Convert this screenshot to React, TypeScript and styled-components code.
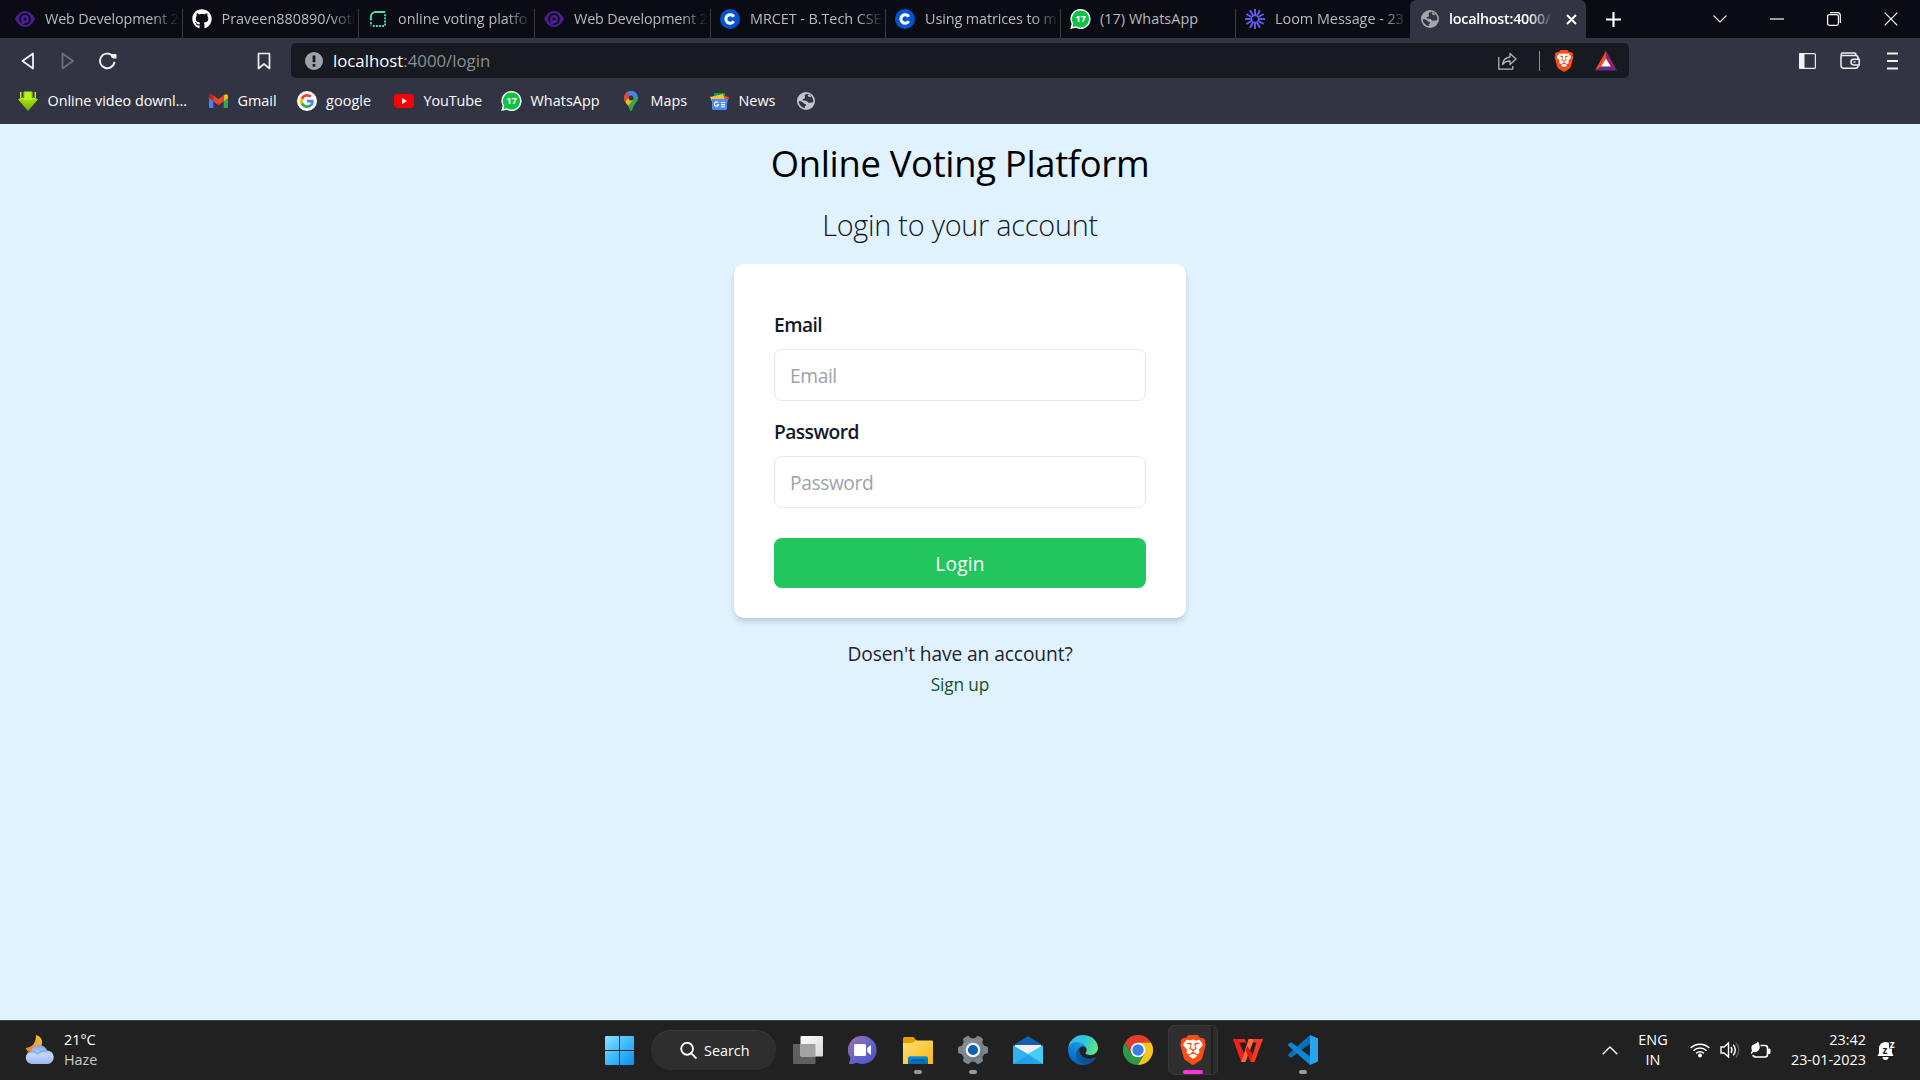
import React from "react";
import styled, { createGlobalStyle } from "styled-components";
import { FaGithub } from "react-icons/fa";
import { SiBrave } from "react-icons/si";

const Global = createGlobalStyle`
  * { box-sizing: border-box; }
  body { margin: 0; overflow: hidden; font-family: "Open Sans", "Noto Sans", sans-serif; }
  svg { display: block; flex: none; }
`;

const Screen = styled.div`
  display: flex;
  flex-direction: column;
  width: 1920px;
  height: 1080px;
  background: #e0f2fe;
`;

/* ---------- tab strip ---------- */

const TabStrip = styled.div`
  display: flex;
  height: 38px;
  padding-left: 6px;
  background: #0b0b14;
`;

const Tab = styled.div<{ $w: number; $active?: boolean; $last?: boolean }>`
  display: flex;
  align-items: center;
  flex: none;
  width: ${(p) => p.$w}px;
  padding-left: ${(p) => (p.$active ? 11 : 9)}px;
  color: ${(p) => (p.$active ? "#fff" : "#b9babd")};
  background: ${(p) =>
    p.$active
      ? "#323443"
      : p.$last
        ? "none"
        : "linear-gradient(#3b3b42, #3b3b42) right bottom / 1px 29px no-repeat"};
  border-radius: 6px 6px 0 0;
`;

const IconBox = styled.span<{ $w?: number }>`
  display: flex;
  justify-content: center;
  align-items: center;
  flex: none;
  width: ${(p) => p.$w ?? 20}px;
  height: 20px;
`;

const TabTitle = styled.span<{ $bold?: boolean; $track?: number; $solid?: boolean }>`
  flex: none;
  width: ${(p) => (p.$bold ? 105 : 134)}px;
  margin-left: 10px;
  overflow: hidden;
  white-space: nowrap;
  font-size: 14.4px;
  line-height: 24px;
  font-weight: ${(p) => (p.$bold ? 600 : 400)};
  letter-spacing: ${(p) => p.$track ?? 0}px;
  mask-image: ${(p) => (p.$solid ? "none" : "linear-gradient(90deg, #000 calc(100% - 26px), transparent)")};
`;

const CloseTab = styled.span`
  display: flex;
  margin-left: 12px;
`;

const NewTab = styled.span`
  display: flex;
  align-items: center;
  margin-left: 20px;
`;

const WindowButtons = styled.div`
  display: flex;
  align-items: center;
  margin-left: auto;
  padding-right: 22px;
  gap: 43px;
`;

/* ---------- navigation row ---------- */

const Toolbar = styled.div`
  display: flex;
  align-items: center;
  height: 45px;
  background: #323443;
`;

const NavButtons = styled.div`
  display: flex;
  align-items: center;
  width: 291px;
  padding-left: 18px;
`;

const NavButton = styled.span<{ $gap?: number }>`
  display: flex;
  margin-right: ${(p) => p.$gap ?? 20}px;
`;

const AddressBar = styled.div`
  display: flex;
  align-items: center;
  width: 1338px;
  height: 35px;
  padding: 0 12px 0 14px;
  border-radius: 5px;
  background: #181a21;
`;

const Address = styled.span`
  margin-left: 10px;
  font-size: 16.8px;
  line-height: 30px;
  color: #8c8e94;
`;

const Host = styled.span`
  color: #fff;
`;

const AddressActions = styled.div`
  display: flex;
  align-items: center;
  margin-left: auto;
`;

const Divider = styled.span`
  width: 1px;
  height: 20px;
  margin: 0 13.5px 0 21.500px;
  background: #8b8d92;
`;

const BraveShield = styled.span<{ $size: number }>`
  display: flex;
  justify-content: center;
  align-items: center;
  width: ${(p) => p.$size}px;
  height: ${(p) => p.$size}px;
  font-size: ${(p) => p.$size}px;
  color: #fb4d14;
  background:
    linear-gradient(#fff, #fff) 50% 26% / 66% 44% no-repeat,
    linear-gradient(#fff, #fff) 50% 60% / 56% 50% no-repeat;
`;

const BatBox = styled.span`
  display: flex;
  margin-left: 20px;
`;

const ToolbarEnd = styled.div`
  display: flex;
  align-items: center;
  margin-left: auto;
  padding-right: 22px;
`;

const EndIcon = styled.span<{ $gap?: number }>`
  display: flex;
  margin-right: ${(p) => p.$gap ?? 0}px;
`;

/* ---------- bookmarks ---------- */

const Bookmarks = styled.div`
  display: flex;
  height: 41px;
  padding: 0 0 5px 18px;
  background: #323443;
`;

const Bookmark = styled.div<{ $w: number; $track?: number }>`
  display: flex;
  align-items: center;
  gap: 9.5px;
  flex: none;
  width: ${(p) => p.$w}px;
  color: #fff;
  font-size: 14.4px;
  line-height: 24px;
  white-space: nowrap;
  letter-spacing: ${(p) => p.$track ?? 0}px;
`;

/* ---------- page ---------- */

const Page = styled.main`
  display: flex;
  flex-direction: column;
  align-items: center;
  flex: 1;
  padding-top: 14px;
`;

const Title = styled.h1`
  margin: 0;
  font-size: 36.4px;
  line-height: 50px;
  font-weight: 400;
  letter-spacing: -0.31px;
  color: #000;
`;

const Subtitle = styled.h2`
  margin: 17px 0 19px;
  font-size: 28.8px;
  line-height: 40px;
  font-weight: 300;
  letter-spacing: -0.23px;
  color: #111827;
`;

const Card = styled.form`
  display: flex;
  flex-direction: column;
  width: 452px;
  height: 354px;
  padding: 46px 40px 30px;
  border-radius: 10px;
  background: #fff;
  box-shadow: 0 5px 7px -1px rgba(0, 0, 0, 0.12), 0 2px 5px -2px rgba(0, 0, 0, 0.12);
`;

const FieldLabel = styled.label`
  margin-bottom: 9px;
  font-size: 19.2px;
  line-height: 30px;
  font-weight: 600;
  letter-spacing: -0.55px;
  color: #111827;
`;

const Field = styled.input`
  width: 372px;
  height: 52px;
  margin-bottom: 16px;
  padding: 1px 15px 0;
  border: 1px solid #e5e7eb;
  border-radius: 8px;
  outline: none;
  background: #fff;
  font-family: inherit;
  font-size: 19.2px;
  letter-spacing: -0.4px;
  &::placeholder { color: #9ca3af; opacity: 1; }
`;

const LoginButton = styled.button`
  height: 50px;
  margin-top: 14px;
  padding: 1px 0 0;
  border: 0;
  border-radius: 8px;
  background: #22c55e;
  color: #fff;
  font-family: inherit;
  font-size: 19.2px;
  letter-spacing: 0.2px;
`;

const Question = styled.p`
  margin: 21px 0 0;
  font-size: 19.2px;
  line-height: 30px;
  letter-spacing: -0.1px;
  color: #1f2430;
`;

const SignUp = styled.a`
  margin-top: 2px;
  font-size: 17.3px;
  line-height: 28px;
  letter-spacing: -0.15px;
  color: #14532d;
`;

/* ---------- taskbar ---------- */

const Taskbar = styled.footer`
  display: flex;
  align-items: center;
  height: 60px;
  padding-bottom: 1px;
  border-top: 1px solid #3b4145;
  background: #212121;
  color: #fff;
  font-size: 14.4px;
  line-height: 20px;
`;

const Weather = styled.div`
  display: flex;
  align-items: center;
  gap: 9px;
  width: 592px;
  padding: 0 0 1px 25px;
`;

const Muted = styled.div`
  color: #cbcbcb;
`;

const Start = styled.div`
  display: flex;
  justify-content: center;
  width: 55px;
`;

const SearchPill = styled.div`
  display: flex;
  align-items: center;
  gap: 7px;
  width: 125px;
  height: 40px;
  margin: 0 4px;
  padding-left: 29px;
  border-radius: 20px;
  border-top: 1px solid #3d3d3d;
  background: #2e2e2e;
`;

const AppSlot = styled.div`
  display: flex;
  flex-direction: column;
  align-items: center;
  width: 55px;
  height: 50px;
  padding-top: 10px;
`;

const ActiveTile = styled.div`
  display: flex;
  flex-direction: column;
  align-items: center;
  width: 50px;
  height: 50px;
  margin: 0 2px 0 3px;
  padding: 9px 0 0 0;
  border: 1px solid #383838;
  border-radius: 6px;
  background: linear-gradient(90deg, #2f2f2f 0 42px, #1f1f1f 42px 44px, #2b2b2b 44px);
`;

const Glyph = styled.span`
  display: flex;
  align-items: center;
  justify-content: center;
  height: 30px;
`;

const Indicator = styled.span<{ $active?: boolean }>`
  width: ${(p) => (p.$active ? 20 : 8)}px;
  height: 4px;
  margin-top: 5px;
  border-radius: 2px;
  background: ${(p) => (p.$active ? "#ff33e0" : "#9b9b9b")};
`;

const Tray = styled.div`
  display: flex;
  align-items: center;
  margin-left: auto;
  padding-right: 24px;
`;

const Language = styled.div`
  width: 40px;
  margin: 0 17px 0 15px;
  text-align: center;
`;

const Clock = styled.div`
  width: 86px;
  margin-left: 9px;
  padding-bottom: 1px;
  text-align: right;
`;

const TrayIcon = styled.span<{ $gap?: number }>`
  display: flex;
  margin-left: ${(p) => p.$gap ?? 10}px;
`;

/* ---------- drawings ---------- */

const EyeIcon = () => (
  <svg width="20" height="18" viewBox="0 0 20 18">
    <path d="M0 9Q4 1 10 1t10 8q-4 8-10 8T0 9Z" fill="#4c1d95" />
    <circle cx="10" cy="9" r="5.9" fill="#0b0b14" />
    <path d="M6.200 15V9A3.900 3.900 0 1 1 10.100 12.900Q8.500 15 6.200 15Z" fill="#4c1d95" />
    <circle cx="10" cy="9" r="1.500" fill="#0b0b14" />
  </svg>
);

const RenderIcon = () => (
  <svg width="16" height="16" viewBox="0 0 17 17" fill="none" stroke="#43e5b5" strokeWidth="2">
    <path d="M1 10V6a5 5 0 0 1 5-5h10" />
    <path d="M16 3.500V16M1 12v4M3 16h13" strokeDasharray="2 1.300" />
  </svg>
);

const CourseraIcon = () => (
  <svg width="20" height="20" viewBox="0 0 20 20">
    <circle cx="10" cy="10" r="10" fill="#0056d2" />
    <path d="M13.800 7.700A4.300 4.300 0 1 0 13.800 12.300" fill="none" stroke="#fff" strokeWidth="3" />
  </svg>
);

const BadgeText = styled.text`
  font: 700 9.5px "Open Sans", sans-serif;
  letter-spacing: -0.3px;
`;

const WhatsAppIcon = () => (
  <svg width="21" height="20" viewBox="0 0 21 20">
    <path d="M10.500 0a10 10 0 1 1-4.700 18.800L.3 20l1.300-5.200A10 10 0 0 1 10.500 0Z" fill="#f4fff7" />
    <path d="M10.500 1.500a8.500 8.500 0 1 1-4.300 15.800L2.500 18l.8-3.300A8.500 8.500 0 0 1 10.500 1.500Z" fill="#0fc144" />
    <BadgeText x="10.400" y="13.400" fill="#fff" textAnchor="middle">17</BadgeText>
  </svg>
);

const LoomIcon = () => (
  <svg width="20" height="20" viewBox="-10 -10 20 20" stroke="#625df5" strokeWidth="1.9">
    {[0, 30, 60, 90, 120, 150, 180, 210, 240, 270, 300, 330].map((a) => (
      <path key={a} d="M0-4V-10" transform={`rotate(${a})`} />
    ))}
    <circle r="3.600" fill="none" strokeWidth="1.500" />
  </svg>
);

const GlobeIcon = ({ bg, fg }: { bg: string; fg: string }) => (
  <svg width="18" height="18" viewBox="0 0 18 18">
    <circle cx="9" cy="9" r="9" fill={fg} />
    <path d="M10.500 1.800Q7 2.500 7.800 4.500T6.200 7Q4.500 8 6.500 8.500q3 0 3.800 1 .6 1.500 2.200 1.200l3.700-.4a7.400 7.400 0 0 0-5.700-8.500Z" fill={bg} />
    <path d="M1.800 9q2.700-.2 4.200 1.500t3 1.500q.3 1.800-1.300 2.400l.5 1.900A7.400 7.400 0 0 1 1.800 9Z" fill={bg} />
    <path d="M10.500 2.200l1 2.600 2.500.4-.6-1.900Z" fill={fg} />
  </svg>
);

const DownloadIcon = () => (
  <svg width="20" height="20" viewBox="0 0 20 20">
    <defs>
      <linearGradient id="dl" x2="0" y2="1">
        <stop stopColor="#c6ff1c" />
        <stop offset="1" stopColor="#6fae05" />
      </linearGradient>
    </defs>
    <path d="M2 1h1.500v5H5V1h.800v5H14.200V1H15v5h1.500V1H18v6.500l2 .8L10 20 0 8.300l2-.8Z" fill="url(#dl)" />
    <path d="M6 .5h8V9H6Z" fill="#baf51a" />
    <path d="M5.800.5V6.500H3M14.200.5V6.500H17" stroke="#4c6b1c" strokeWidth=".8" fill="none" />
  </svg>
);

const GmailIcon = () => (
  <svg width="19" height="14" viewBox="0 0 19 14">
    <path d="M0 2v11a1 1 0 0 0 1 1h3.300V5Z" fill="#4285f4" />
    <path d="M19 2v11a1 1 0 0 1-1 1h-3.300V5Z" fill="#34a853" />
    <path d="M14.700 1.300 17 .2q2-.4 2 2V4l-4.300 3.300Z" fill="#fbbc04" />
    <path d="M4.300 1.300 2 .2Q0-.2 0 2.200V4l4.300 3.300Z" fill="#c5221f" />
    <path d="M4.300 1.300 9.500 5.200l5.200-3.900v6L9.500 11.200 4.300 7.300Z" fill="#ea4335" />
  </svg>
);

const GoogleIcon = () => (
  <svg width="20" height="20" viewBox="0 0 20 20">
    <circle cx="10" cy="10" r="10" fill="#fff" />
    <g transform="translate(3 3) scale(.292)">
      <path fill="#ea4335" d="M24 9.500c3.540 0 6.710 1.220 9.210 3.600l6.850-6.850C35.900 2.380 30.470 0 24 0 14.620 0 6.510 5.380 2.560 13.220l7.980 6.190C12.430 13.720 17.740 9.500 24 9.500z" />
      <path fill="#4285f4" d="M46.980 24.550c0-1.570-.15-3.090-.38-4.550H24v9.020h12.940c-.58 2.960-2.260 5.480-4.780 7.180l7.730 6c4.510-4.180 7.090-10.360 7.090-17.650z" />
      <path fill="#fbbc05" d="M10.530 28.590c-.48-1.450-.76-2.990-.76-4.590s.27-3.140.76-4.590l-7.980-6.190C.92 16.460 0 20.120 0 24c0 3.880.92 7.540 2.560 10.780l7.970-6.190z" />
      <path fill="#34a853" d="M24 48c6.480 0 11.930-2.130 15.890-5.810l-7.730-6c-2.150 1.450-4.920 2.300-8.160 2.300-6.260 0-11.570-4.220-13.470-9.910l-7.980 6.190C6.510 42.620 14.620 48 24 48z" />
    </g>
  </svg>
);

const YouTubeIcon = () => (
  <svg width="20" height="14" viewBox="0 0 20 14">
    <rect width="20" height="14" rx="3.500" fill="#f00" />
    <path d="M8 4l5 3-5 3Z" fill="#fff" />
  </svg>
);

const MapsIcon = () => (
  <svg width="14" height="20" viewBox="0 0 14 20">
    <defs>
      <clipPath id="pin">
        <path d="M7 0a7 7 0 0 1 7 7c0 4-4.500 6-5.800 12Q7 21 5.800 19C4.500 13 0 11 0 7A7 7 0 0 1 7 0Z" />
      </clipPath>
    </defs>
    <g clipPath="url(#pin)">
      <path d="M0 0h14v20H0Z" fill="#34a853" />
      <path d="M0 0h14v4L7 10 2 3Z" fill="#4285f4" />
      <path d="M0 2 2.500 1 7 6 1 12H0Z" fill="#ea4335" />
      <path d="M0 12 5 6l4 3-6 7Z" fill="#fbbc04" />
      <path d="M8 0h6v4L8 8Z" fill="#4285f4" />
    </g>
    <circle cx="7" cy="7" r="2.500" fill="#323443" />
  </svg>
);

const NewsIcon = () => (
  <svg width="19" height="17" viewBox="0 0 19 17">
    <path d="M4 0h11v6H4Z" fill="#0c9d58" />
    <path d="M12 2l7 2-2 7-5-3Z" fill="#ea4335" />
    <path d="M0 4 13 1l2 6-12 4Z" fill="#fbc02d" />
    <path d="M2 6h15v9.500a1.500 1.500 0 0 1-1.500 1.500h-12A1.500 1.500 0 0 1 2 15.500Z" fill="#4f8df5" />
    <path d="M8.300 9.800a2.200 2.200 0 1 0 .3 2H6.700M11 9.500h4M11 11.600h4M11 13.700h4" fill="none" stroke="#fff" strokeWidth="1.100" />
  </svg>
);

const LineIcon = ({ w, h, d, color = "#f0f0f2", sw = 2 }: { w: number; h: number; d: string; color?: string; sw?: number }) => (
  <svg width={w} height={h} viewBox={`0 0 ${w} ${h}`} fill="none" stroke={color} strokeWidth={sw} strokeLinejoin="round">
    <path d={d} />
  </svg>
);

const ReloadIcon = () => (
  <svg width="20" height="18" viewBox="0 0 20 18">
    <path d="M14.500 3.800A7.300 7.300 0 1 0 16.500 9.800" fill="none" stroke="#f0f0f2" strokeWidth="1.900" />
    <path d="M13 2h4.500q1 0 1 1v3.500h-3Q13 6 13 4Z" fill="#f0f0f2" />
  </svg>
);

const InfoIcon = () => (
  <svg width="18" height="18" viewBox="0 0 18 18">
    <circle cx="9" cy="9" r="9" fill="#a0a2ab" />
    <path d="M7.600 3.500h2.800v6.700H7.600ZM7.600 12h2.800v2.700H7.600Z" fill="#181a21" />
  </svg>
);

const BatIcon = () => (
  <svg width="22" height="20" viewBox="0 0 22 20">
    <path d="M11 0 0 19.500l6.500-4L11 8Z" fill="#ff4724" />
    <path d="M11 0l11 19.500-6.500-4L11 8Z" fill="#9e1f63" />
    <path d="M0 19.500 6.500 15.500h9l6.500 4Z" fill="#662d91" />
    <path d="M11 7.500 15.800 15.600H6.200Z" fill="#fff" />
  </svg>
);

const SidebarIcon = () => (
  <svg width="17" height="16" viewBox="0 0 17 16">
    <rect x=".6" y=".6" width="15.800" height="14.800" rx="1" fill="none" stroke="#e9e9ec" strokeWidth="1.200" />
    <path d="M0 1q0-1 1-1h4.500v16H1q-1 0-1-1Z" fill="#f2f2f4" />
  </svg>
);

const WalletIcon = () => (
  <svg width="20" height="18" viewBox="0 0 20 18" fill="none" stroke="#f0f0f2" strokeWidth="1.500">
    <path d="M1 3.500v10.300a2.500 2.500 0 0 0 2.500 2.500h12a2.500 2.500 0 0 0 2.500-2.500M18 7V5.800A2.300 2.300 0 0 0 15.700 3.500H2.500A1.300 1.300 0 0 1 2.500.9h11.500a2 2 0 0 1 2 2" />
    <path d="M19.200 7.300h-5.500a2.800 2.800 0 0 0 0 5.600h5.500ZM13.500 10h2" />
  </svg>
);

const RestoreIcon = () => (
  <svg width="14" height="14" viewBox="0 0 14 14" fill="none" stroke="#fff" strokeWidth="1.200">
    <rect x=".6" y="2.600" width="10.800" height="10.800" rx="1.800" />
    <path d="M3 .7h7.500a2.800 2.800 0 0 1 2.800 2.800V11" />
  </svg>
);

const WeatherIcon = () => (
  <svg width="30" height="30" viewBox="0 0 30 30">
    <defs>
      <linearGradient id="cloud" x2="0" y2="1">
        <stop stopColor="#7ca2e4" />
        <stop offset=".5" stopColor="#c3d7f8" />
        <stop offset="1" stopColor="#9ab9ee" />
      </linearGradient>
      <linearGradient id="moon" x1="1" x2="0" y2="1">
        <stop stopColor="#f6c445" />
        <stop offset="1" stopColor="#f0711e" />
      </linearGradient>
    </defs>
    <path d="M11 0q7 2 6 9T7 18Q2 17 .5 13 11 12 11 0Z" fill="url(#moon)" />
    <path d="M6.500 29a6.300 6.300 0 0 1-.4-12.500 8.500 8.500 0 0 1 16-1 6.800 6.800 0 0 1 1 13.500Z" fill="url(#cloud)" />
    <path d="M2 18q6-3 11 1 3-4 9-3" fill="none" stroke="#7199df" strokeWidth="1.200" opacity=".7" />
  </svg>
);

const WindowsIcon = () => (
  <svg width="29" height="29" viewBox="0 0 29 29">
    <defs>
      <linearGradient id="win" x2="29" y2="29" gradientUnits="userSpaceOnUse">
        <stop stopColor="#8be1ff" />
        <stop offset=".5" stopColor="#3dbcfb" />
        <stop offset="1" stopColor="#0a8ff0" />
      </linearGradient>
    </defs>
    <path d="M1 0h13v14H0V1q0-1 1-1ZM15 0h13q1 0 1 1v13H15ZM0 15h14v14H1q-1 0-1-1ZM15 15h14v13q0 1-1 1H15Z" fill="url(#win)" />
  </svg>
);

const TaskViewIcon = () => (
  <svg width="30" height="28" viewBox="0 0 30 28">
    <defs>
      <linearGradient id="tv" x2="1" y2="1">
        <stop stopColor="#fff" />
        <stop offset="1" stopColor="#d8d8d8" />
      </linearGradient>
    </defs>
    <rect y="8" width="22.500" height="20" rx="1" fill="#606060" />
    <rect x="7.500" width="22.500" height="20.500" rx="1" fill="url(#tv)" />
    <path d="M7.500 8h15v12.500h-15Z" fill="#a3a3a3" />
  </svg>
);

const ChatIcon = () => (
  <svg width="29" height="28" viewBox="0 0 29 28">
    <defs>
      <linearGradient id="chat" x2="1" y2="1">
        <stop stopColor="#a86fa6" />
        <stop offset=".45" stopColor="#6a67c9" />
        <stop offset="1" stopColor="#4a50d0" />
      </linearGradient>
    </defs>
    <path d="M14.700 0a14 14 0 1 1-6 26.700Q5 28.500 1 28l1.500-6A14 14 0 0 1 14.700 0Z" fill="url(#chat)" />
    <rect x="6" y="8" width="12" height="12" rx="1.500" fill="#fff" />
    <path d="M19.300 12 23 9v10l-3.700-3Z" fill="#fff" />
  </svg>
);

const ExplorerIcon = () => (
  <svg width="30" height="27" viewBox="0 0 30 27">
    <defs>
      <linearGradient id="fold" x2="1" y2="1">
        <stop stopColor="#ffdf73" />
        <stop offset="1" stopColor="#fdb813" />
      </linearGradient>
      <linearGradient id="foldb" x2="0" y2="1">
        <stop stopColor="#0f8fdd" />
        <stop offset="1" stopColor="#0566b4" />
      </linearGradient>
    </defs>
    <path d="M0 1.500Q0 0 1.500 0h9L13.500 3.500V12H0Z" fill="#e5a000" />
    <path d="M0 6h9.500l3-2.500H29q1 0 1 1V27H0Z" fill="url(#fold)" />
    <path d="M5 27v-6q0-1.700 1.700-1.700h16.600q1.700 0 1.700 1.700v6Z" fill="url(#foldb)" />
    <path d="M8.500 23h13" stroke="#084a86" strokeWidth="1.200" />
  </svg>
);

const GearIcon = () => (
  <svg width="30" height="30" viewBox="-15 -15 30 30">
    <defs>
      <linearGradient id="gear" x1="-15" y1="-15" x2="15" y2="15" gradientUnits="userSpaceOnUse">
        <stop stopColor="#949ca4" />
        <stop offset="1" stopColor="#626b73" />
      </linearGradient>
    </defs>
    <circle r="11.800" fill="url(#gear)" />
    <g fill="#7d868e">
      {[30, 90, 150, 210, 270, 330].map((a) => (
        <path key={a} transform={`rotate(${a})`} d="M-4.600-10 L-3.200-14.600Q0-15.600 3.200-14.600L4.600-10Z" />
      ))}
    </g>
    <circle r="6.200" fill="#0d62b5" stroke="#f2f2f2" strokeWidth="2.200" />
  </svg>
);

const MailIcon = () => (
  <svg width="30" height="28" viewBox="0 0 30 28">
    <path d="M0 9.500 15 0l15 9.500V14H0Z" fill="#0f5fb4" />
    <path d="M2 9h26v9H2Z" fill="#efefef" />
    <path d="M0 9.500 15 18l15-8.500V28H0Z" fill="#2cc2f5" />
    <path d="M15 18 30 9.500V28Z" fill="#45cdf6" />
    <path d="M0 28V9.500L30 28Z" fill="#2fb2f1" />
    <path d="M15 18.700 30 28H0Z" fill="#1d94e0" opacity=".55" />
  </svg>
);

const EdgeIcon = () => (
  <svg width="30" height="30" viewBox="0 0 256 256">
    <defs>
      <linearGradient id="e1" x1="60" x2="240" y1="180" y2="180" gradientUnits="userSpaceOnUse">
        <stop stopColor="#0c59a4" />
        <stop offset="1" stopColor="#114a8b" />
      </linearGradient>
      <linearGradient id="e2" x1="120" x2="40" y1="70" y2="220" gradientUnits="userSpaceOnUse">
        <stop stopColor="#1b9de2" />
        <stop offset=".6" stopColor="#0f7ad6" />
        <stop offset="1" stopColor="#0667c5" />
      </linearGradient>
      <linearGradient id="e3" x1="10" x2="250" y1="60" y2="130" gradientUnits="userSpaceOnUse">
        <stop stopColor="#35b8f1" />
        <stop offset=".5" stopColor="#2fc6dc" />
        <stop offset="1" stopColor="#66eb6e" />
      </linearGradient>
    </defs>
    <path fill="url(#e1)" d="M231 190.500c-3.400 1.800-6.900 3.400-10.500 4.700a101.500 101.500 0 0 1-35.900 6.500c-47.300 0-88.500-32.500-88.500-74.300.1-11.400 6.400-21.900 16.400-27.300-42.800 1.800-53.800 46.400-53.800 72.500 0 73.900 68.100 81.400 82.800 81.400 7.900 0 19.800-2.300 27-4.600l1.300-.4a128.300 128.300 0 0 0 66.600-52.800 4 4 0 0 0-5.400-5.700z" />
    <path fill="url(#e2)" d="M105.700 241.400a79.200 79.200 0 0 1-22.700-21.300 80.700 80.700 0 0 1 29.500-120c3.200-1.500 8.500-4.100 15.600-4a32.400 32.400 0 0 1 25.700 13 31.900 31.900 0 0 1 6.300 18.700c0-.2 24.500-79.600-80-79.600-43.900 0-80 41.700-80 78.200a130.200 130.200 0 0 0 12.100 56 128 128 0 0 0 156.400 67.100 75.600 75.600 0 0 1-62.800-8z" />
    <path fill="url(#e3)" d="M152.300 148.900c-.9 1-3.400 2.500-3.400 5.600 0 2.600 1.700 5.200 4.800 7.300 14.300 10 41.400 8.600 41.500 8.600a59.600 59.600 0 0 0 30.300-8.300 61.400 61.400 0 0 0 30.400-52.900c.3-22.400-8-37.300-11.300-43.900C223.500 23.900 177.700 0 128 0A128 128 0 0 0 0 126.200c.5-36.500 36.800-66 80-66 3.500 0 23.500.3 42 10a72.600 72.600 0 0 1 30.900 29.300c6.100 10.600 7.200 24.100 7.200 29.500s-2.700 13.300-7.800 19.900z" />
  </svg>
);

const ChromeIcon = () => (
  <svg width="30" height="30" viewBox="-15 -15 30 30">
    <path d="M-13-7.500A15 15 0 0 1 13-7.500H0L-6.500 3.750Z" fill="#e33b2e" />
    <path d="M-13-7.500A15 15 0 0 0 0 15L6.500 3.750H-6.500Z" fill="#2a9a48" />
    <path d="M13-7.500A15 15 0 0 1 0 15L6.500 3.750 0-7.500Z" fill="#fcc31d" />
    <circle r="7.300" fill="#fff" />
    <circle r="5.700" fill="#3b7ded" />
  </svg>
);

const WpsIcon = () => (
  <svg width="30" height="23" viewBox="0 0 30 23" fill="none">
    <path d="M0 0h11.500l2 3.500H1.500Z" fill="#ff2a20" />
    <path d="M0 0h5l6 15-1 8H8.300Z" fill="#f32017" />
    <path d="M15.500 0h5.700L12.500 23H8.300Z" fill="#ff6a3c" />
    <path d="M14.500 7 20 16v7h-2.500L12.500 11Z" fill="#e5180f" />
    <path d="M24.500 0H30L21.500 23h-4Z" fill="#f4391f" />
    <path d="M20 0h10l-1.300 3.500h-8.500Z" fill="#ff3b25" />
  </svg>
);

const CodeIcon = () => (
  <svg width="30" height="30" viewBox="0 0 30 30">
    <path d="M22 0 30 3.500v23L22 30Z" fill="#27a5f2" />
    <path d="M22 0v8.700L3.800 22.300q-1 .7-1.800 0L.5 20.900q-.8-.9 0-1.800Z" fill="#0b6fb8" />
    <path d="M22 30v-8.700L3.800 7.700q-1-.7-1.800 0L.5 9.100q-.8.900 0 1.800Z" fill="#0d86d3" />
  </svg>
);

const WifiIcon = () => (
  <svg width="20" height="16" viewBox="0 0 20 16" fill="none" stroke="#fff" strokeWidth="1.500">
    <path d="M.7 6a13.200 13.200 0 0 1 18.600 0M3.500 8.800a9.200 9.200 0 0 1 13 0M6.200 11.400a5.400 5.400 0 0 1 7.600 0" />
    <circle cx="10" cy="13.500" r="2" fill="#fff" stroke="none" />
  </svg>
);

const SpeakerIcon = () => (
  <svg width="20" height="18" viewBox="0 0 20 18" fill="none" stroke="#fff" strokeWidth="1.400">
    <path d="M1 6h3l4.500-4v14L4 12H1ZM11 6q2 3 0 6M13.300 3.700q4 5.300 0 10.600" />
    <path d="M15.800 1.500q6 7.500 0 15" stroke="#5a5a5a" />
  </svg>
);

const BatteryIcon = () => (
  <svg width="21" height="18" viewBox="0 0 21 18">
    <path d="M10.500 4.500H15a2.500 2.500 0 0 1 2.500 2.500v6.500A2.500 2.500 0 0 1 15 16H6q-2.500 0-3-2" fill="none" stroke="#fff" strokeWidth="1.600" />
    <path d="M18.500 8H20v4.500h-1.500Z" fill="#fff" stroke="#fff" />
    <path d="M8 .5q3.500 6 0 9.500-2 1.800-4.500.8L1.500 13l-.8-.8L2 9.500Q0 4.500 4 3.200 7 2.500 8 .5Z" fill="#fff" />
  </svg>
);

const SnoozeText = styled.text`
  font: 700 10px "Open Sans", sans-serif;
`;

const BellIcon = () => (
  <svg width="19" height="19" viewBox="0 0 19 19">
    <path d="M8.500 1A6.300 6.300 0 0 1 15 7.500V12l1.500 3H.5L2 12V7.500A6.300 6.300 0 0 1 8.500 1ZM5.500 16h6a3 3 0 0 1-6 0Z" fill="#fff" />
    <SnoozeText x="5.500" y="12.500" fill="#212121">z</SnoozeText>
    <path d="M12 0H19v7.500h-7Z" fill="#212121" />
    <SnoozeText x="12.800" y="7" fill="#fff">z</SnoozeText>
  </svg>
);

/* ---------- screen ---------- */

const tabs = [
  { icon: <EyeIcon />, title: "Web Development 2", w: 176.5, track: -0.15 },
  { icon: <FaGithub size={20} color="#fff" />, title: "Praveen880890/voti", w: 176.5 },
  { icon: <RenderIcon />, title: "online voting platfo", w: 176 },
  { icon: <EyeIcon />, title: "Web Development 2", w: 176, track: -0.15 },
  { icon: <CourseraIcon />, title: "MRCET - B.Tech CSE", w: 175, track: -0.05 },
  { icon: <CourseraIcon />, title: "Using matrices to m", w: 175, track: -0.1 },
  { icon: <WhatsAppIcon />, title: "(17) WhatsApp", w: 175, track: 0.05, solid: true },
  { icon: <LoomIcon />, title: "Loom Message - 23", w: 174 },
];

const bookmarks = [
  { icon: <DownloadIcon />, label: "Online video downl...", w: 190, track: -0.05 },
  { icon: <GmailIcon />, label: "Gmail", w: 88.5 },
  { icon: <GoogleIcon />, label: "google", w: 97.5, track: 0.1 },
  { icon: <YouTubeIcon />, label: "YouTube", w: 107, track: -0.1 },
  { icon: <WhatsAppIcon />, label: "WhatsApp", w: 120, track: 0.05 },
  { icon: <MapsIcon />, label: "Maps", w: 88 },
  { icon: <NewsIcon />, label: "News", w: 87 },
  { icon: <GlobeIcon bg="#323443" fg="#c2c5c9" />, label: "", w: 20 },
];

const apps = [
  { icon: <TaskViewIcon /> },
  { icon: <ChatIcon /> },
  { icon: <ExplorerIcon />, running: true },
  { icon: <GearIcon />, running: true },
  { icon: <MailIcon /> },
  { icon: <EdgeIcon /> },
  { icon: <ChromeIcon /> },
  { icon: <BraveShield $size={30}><SiBrave /></BraveShield>, active: true },
  { icon: <WpsIcon /> },
  { icon: <CodeIcon />, running: true },
];

export default function App() {
  return (
    <Screen>
      <Global />
      <TabStrip>
        {tabs.map((t, i) => (
          <Tab key={i} $w={t.w} $last={i === tabs.length - 1}>
            <IconBox>{t.icon}</IconBox>
            <TabTitle $track={t.track} $solid={t.solid}>{t.title}</TabTitle>
          </Tab>
        ))}
        <Tab $active $w={176}>
          <IconBox $w={18}><GlobeIcon bg="#323443" fg="#a3a5ab" /></IconBox>
          <TabTitle $bold $track={-0.27}>localhost:4000/</TabTitle>
          <CloseTab><LineIcon w={11} h={11} d="M1 1l9 9M10 1l-9 9" color="#fff" /></CloseTab>
        </Tab>
        <NewTab><LineIcon w={15} h={15} d="M7.500 0v15M0 7.500h15" color="#fff" sw={2.2} /></NewTab>
        <WindowButtons>
          <LineIcon w={14} h={8} d="M.5.5 7 7 13.500.5" color="#e8e8e8" sw={1.1} />
          <LineIcon w={14} h={2} d="M0 1h14" color="#fff" sw={1.2} />
          <RestoreIcon />
          <LineIcon w={14} h={14} d="M.7.7l12.600 12.600M13.300.7.7 13.300" color="#fff" sw={1.2} />
        </WindowButtons>
      </TabStrip>

      <Toolbar>
        <NavButtons>
          <NavButton $gap={22}><LineIcon w={18} h={18} d="M15 1.500v15L4.500 9Z" sw={1.8} /></NavButton>
          <NavButton $gap={22}><LineIcon w={18} h={18} d="M4.500 1.500v15L15 9Z" color="#6d6f7b" sw={1.8} /></NavButton>
          <NavButton $gap={139}><ReloadIcon /></NavButton>
          <NavButton><LineIcon w={14} h={18} d="M1.500 1.500h11v15L7 12l-5.500 4.500Z" sw={1.7} /></NavButton>
        </NavButtons>
        <AddressBar>
          <InfoIcon />
          <Address><Host>localhost</Host>:4000/login</Address>
          <AddressActions>
            <LineIcon w={19} h={18} d="M.8 5v12.200h14V14M4.500 12.500Q5 6 12 5V1.500L18 7l-6 5.500V9q-5 0-7.500 3.500Z" color="#b4b5b9" sw={1.3} />
            <Divider />
            <BraveShield $size={22}><SiBrave /></BraveShield>
            <BatBox><BatIcon /></BatBox>
          </AddressActions>
        </AddressBar>
        <ToolbarEnd>
          <EndIcon $gap={24}><SidebarIcon /></EndIcon>
          <EndIcon $gap={27}><WalletIcon /></EndIcon>
          <EndIcon><LineIcon w={11} h={18} d="M0 1.500h11M0 9h11M0 16.500h11" sw={1.8} /></EndIcon>
        </ToolbarEnd>
      </Toolbar>

      <Bookmarks>
        {bookmarks.map((b, i) => (
          <Bookmark key={i} $w={b.w} $track={b.track}>
            <IconBox>{b.icon}</IconBox>
            {b.label}
          </Bookmark>
        ))}
      </Bookmarks>

      <Page>
        <Title>Online Voting Platform</Title>
        <Subtitle>Login to your account</Subtitle>
        <Card>
          <FieldLabel htmlFor="email">Email</FieldLabel>
          <Field id="email" placeholder="Email" />
          <FieldLabel htmlFor="password">Password</FieldLabel>
          <Field id="password" type="password" placeholder="Password" />
          <LoginButton type="button">Login</LoginButton>
        </Card>
        <Question>Dosen't have an account?</Question>
        <SignUp>Sign up</SignUp>
      </Page>

      <Taskbar>
        <Weather>
          <WeatherIcon />
          <div>
            <div>21°C</div>
            <Muted>Haze</Muted>
          </div>
        </Weather>
        <Start><WindowsIcon /></Start>
        <SearchPill>
          <LineIcon w={17} h={17} d="M13 6.800A5.900 5.900 0 1 1 1.200 6.800 5.900 5.900 0 0 1 13 6.800ZM11.300 11.300 16.500 16.500" color="#fff" sw={1.9} />
          Search
        </SearchPill>
        {apps.map((a, i) =>
          a.active ? (
            <ActiveTile key={i}>
              <Glyph>{a.icon}</Glyph>
              <Indicator $active />
            </ActiveTile>
          ) : (
            <AppSlot key={i}>
              <Glyph>{a.icon}</Glyph>
              {a.running && <Indicator />}
            </AppSlot>
          )
        )}
        <Tray>
          <LineIcon w={16} h={9} d="M.7 8.300 8 1l7.300 7.300" color="#fff" sw={1.4} />
          <Language>
            <div>ENG</div>
            <div>IN</div>
          </Language>
          <TrayIcon $gap={0}><WifiIcon /></TrayIcon>
          <TrayIcon><SpeakerIcon /></TrayIcon>
          <TrayIcon><BatteryIcon /></TrayIcon>
          <Clock>
            <div>23:42</div>
            <div>23-01-2023</div>
          </Clock>
          <TrayIcon $gap={11}><BellIcon /></TrayIcon>
        </Tray>
      </Taskbar>
    </Screen>
  );
}
